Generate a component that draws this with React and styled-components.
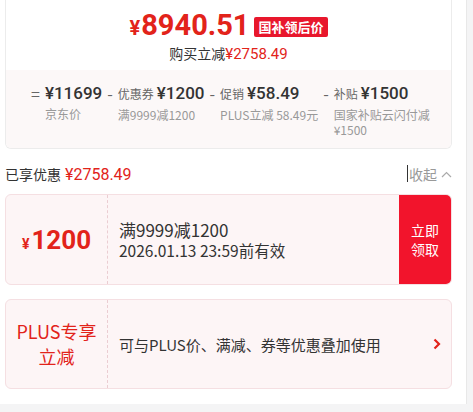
import React from 'react';
import styled, { createGlobalStyle } from 'styled-components';

const RED = '#e2231a';

const breakdown = [
  { op: '=', label: '', value: '¥11699', desc: '京东价' },
  { op: '-', label: '优惠券', value: '¥1200', desc: '满9999减1200' },
  { op: '-', label: '促销', value: '¥58.49', desc: 'PLUS立减 58.49元' },
  { op: '-', label: '补贴', value: '¥1500', desc: '国家补贴云闪付减 ¥1500' },
];

const App = () => {
  return (
    <>
      <GlobalStyle />
      <Panel>
        <PriceCard>
          <PriceBlock>
            <PriceRow>
              <BigPrice>
                <Yen>¥</Yen>8940.51
              </BigPrice>
              <Badge>国补领后价</Badge>
            </PriceRow>
            <SubLine>
              购买立减<SubRed>¥2758.49</SubRed>
            </SubLine>
          </PriceBlock>
          <Breakdown>
            {breakdown.map((item, i) => (
              <Item key={i} $last={i === breakdown.length - 1}>
                <Op>{item.op}</Op>
                <Stack>
                  <Title>
                    {item.label && <Label>{item.label}</Label>}
                    <Value>{item.value}</Value>
                  </Title>
                  <Desc>{item.desc}</Desc>
                </Stack>
              </Item>
            ))}
          </Breakdown>
        </PriceCard>

        <SavedRow>
          <Saved>
            已享优惠<SavedPrice>¥2758.49</SavedPrice>
          </Saved>
          <Collapse>
            <Caret />
            收起
            <svg width="11" height="7" viewBox="0 0 11 7">
              <polyline points="1,6 5.5,1.5 10,6" fill="none" stroke="#aaa" strokeWidth="1.2" />
            </svg>
          </Collapse>
        </SavedRow>

        <Coupon>
          <CouponLeft>
            <CouponAmount>
              <small>¥</small>1200
            </CouponAmount>
          </CouponLeft>
          <CouponBody>
            <CouponTitle>满9999减1200</CouponTitle>
            <CouponDate>2026.01.13 23:59前有效</CouponDate>
          </CouponBody>
          <ClaimButton>
            立即
            <br />
            领取
          </ClaimButton>
        </Coupon>

        <Coupon $gap>
          <CouponLeft>
            <PlusLabel>
              PLUS专享
              <br />
              立减
            </PlusLabel>
          </CouponLeft>
          <CouponBody $row>
            <PlusText>可与PLUS价、满减、券等优惠叠加使用</PlusText>
            <svg width="8" height="12" viewBox="0 0 8 12">
              <polyline points="1.5,1.5 6,6 1.5,10.5" fill="none" stroke={RED} strokeWidth="2.2" />
            </svg>
          </CouponBody>
        </Coupon>
      </Panel>
    </>
  );
};

export default App;

const GlobalStyle = createGlobalStyle`
  html, body {
    margin: 0;
    padding: 0;
    background: #f4f4f5;
  }
  body {
    font-family: "Noto Sans CJK SC", "Noto Sans", sans-serif;
    color: #333;
  }
`;

const Panel = styled.div`
  width: 467px;
  height: 404px;
  box-sizing: border-box;
  background: #fff;
  border-right: 1px solid #e8e8e8;
  padding: 0 14px 0 5px;
`;

const PriceCard = styled.div`
  border: 1px solid #ececec;
  border-top: none;
  border-radius: 0 0 6px 6px;
  overflow: hidden;
`;

const PriceBlock = styled.div`
  background: #fff;
  padding: 9px 0 6px;
  display: flex;
  flex-direction: column;
  align-items: center;
`;

const PriceRow = styled.div`
  display: flex;
  align-items: center;
  justify-content: center;
  height: 34px;
`;

const BigPrice = styled.div`
  font-family: Roboto, "Liberation Sans", sans-serif;
  font-weight: 700;
  font-size: 29px;
  line-height: 34px;
  color: ${RED};
  margin-right: 5px;
`;

const Yen = styled.span`
  font-size: 20px;
  margin-right: 1px;
`;

const Badge = styled.span`
  background: #e8172c;
  color: #fff;
  font-size: 13px;
  font-weight: 700;
  line-height: 20px;
  padding: 0 4px;
  border-radius: 2px;
  margin-top: 2px;
`;

const SubLine = styled.div`
  font-size: 14px;
  line-height: 20px;
  color: #333;
`;

const SubRed = styled.span`
  font-family: Roboto, "Liberation Sans", sans-serif;
  font-size: 15px;
  color: ${RED};
`;

const Breakdown = styled.div`
  background: #fcf8f8;
  display: flex;
  gap: 5px;
  padding: 12px 20px 11px 25px;
`;

const Item = styled.div`
  display: flex;
  align-items: flex-start;
  flex-shrink: ${(p) => (p.$last ? 1 : 0)};
  min-width: 0;
  white-space: ${(p) => (p.$last ? 'normal' : 'nowrap')};
`;

const Op = styled.span`
  font-size: 16px;
  line-height: 22px;
  color: #666;
  margin-right: 5px;
  flex-shrink: 0;
`;

const Stack = styled.div`
  display: flex;
  flex-direction: column;
  min-width: 0;
`;

const Title = styled.div`
  display: flex;
  align-items: baseline;
  gap: 3px;
  white-space: nowrap;
  line-height: 22px;
`;

const Label = styled.span`
  font-size: 12px;
  color: #666;
`;

const Value = styled.span`
  font-family: Roboto, "Liberation Sans", sans-serif;
  font-size: 17px;
  font-weight: 500;
  color: #333;
`;

const Desc = styled.div`
  font-size: 12px;
  line-height: 15px;
  color: #999;
  margin-top: 2px;
`;

const SavedRow = styled.div`
  display: flex;
  justify-content: space-between;
  align-items: center;
  height: 20px;
  margin: 15px 0 10px;
`;

const Saved = styled.div`
  font-size: 14px;
  color: #333;
`;

const SavedPrice = styled.span`
  font-family: Roboto, "Liberation Sans", sans-serif;
  font-size: 16px;
  color: ${RED};
  margin-left: 4px;
`;

const Collapse = styled.div`
  display: flex;
  align-items: center;
  gap: 4px;
  font-size: 14px;
  color: #999;
  position: relative;

  svg {
    margin-top: 1px;
  }
`;

const Caret = styled.span`
  position: absolute;
  left: -2px;
  top: 1px;
  width: 1px;
  height: 17px;
  background: #333;
`;

const Coupon = styled.div`
  display: flex;
  height: ${(p) => (p.$gap ? '90px' : '91px')};
  box-sizing: border-box;
  margin-top: ${(p) => (p.$gap ? '14px' : '0')};
  border: 1px solid #f5dfe2;
  border-radius: 6px;
  background: #fdf5f6;
  overflow: hidden;
`;

const CouponLeft = styled.div`
  width: 101px;
  flex-shrink: 0;
  border-right: 1px dashed #ebcdd2;
  display: flex;
  align-items: center;
  justify-content: center;
`;

const CouponAmount = styled.div`
  font-family: Roboto, "Liberation Sans", sans-serif;
  font-weight: 700;
  font-size: 26px;
  color: ${RED};

  small {
    font-size: 14px;
    margin-right: 2px;
  }
`;

const CouponBody = styled.div`
  flex: 1;
  display: flex;
  flex-direction: ${(p) => (p.$row ? 'row' : 'column')};
  justify-content: ${(p) => (p.$row ? 'space-between' : 'center')};
  align-items: ${(p) => (p.$row ? 'center' : 'flex-start')};
  padding: 0 10px 0 11px;
`;

const CouponTitle = styled.div`
  font-size: 17px;
  line-height: 21px;
  color: #333;
`;

const CouponDate = styled.div`
  font-size: 15.5px;
  line-height: 20px;
  color: #333;
`;

const ClaimButton = styled.div`
  width: 52px;
  flex-shrink: 0;
  background: #f2142c;
  color: #fff;
  font-size: 14px;
  line-height: 19px;
  display: flex;
  align-items: center;
  justify-content: center;
  text-align: center;
`;

const PlusLabel = styled.div`
  font-size: 18px;
  line-height: 25px;
  color: ${RED};
  text-align: center;
`;

const PlusText = styled.div`
  font-size: 15px;
  color: #333;
`;
